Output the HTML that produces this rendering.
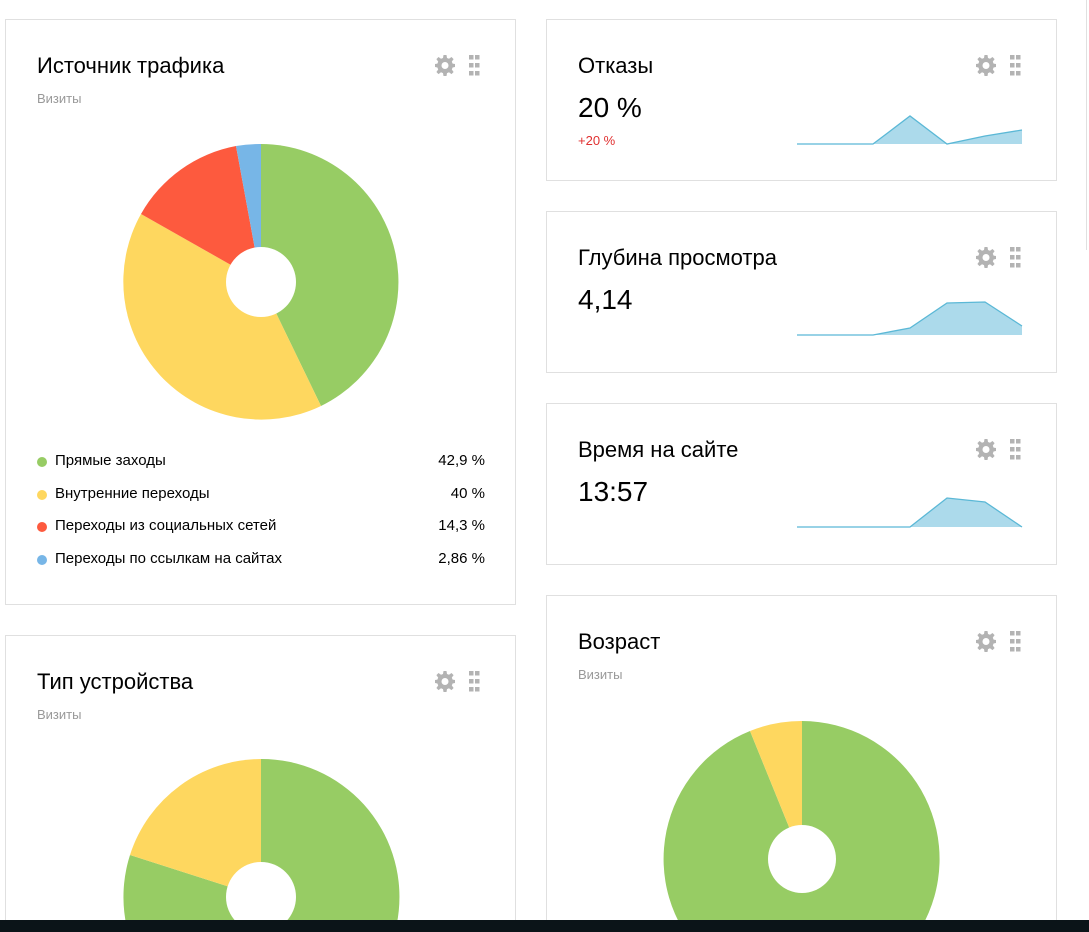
<!DOCTYPE html>
<html><head><meta charset="utf-8"><style>
html,body{margin:0;width:1089px;height:932px;overflow:hidden}
body{background:#fff;position:relative;font-family:"Liberation Sans",sans-serif;color:#000}
.card{position:absolute;border:1px solid #e0e0e0;background:#fff;box-sizing:border-box}
.t{position:absolute;font-size:22px;left:31px}
.s{position:absolute;font-size:13px;color:#999;left:31px}
.ic{position:absolute}
.lg{position:absolute;left:31px;width:448px;font-size:15px}
.lg div{height:32.5px;position:relative;padding-left:18px}
.lg i{position:absolute;left:0;top:5px;width:10px;height:10px;border-radius:50%}
.lg span{position:absolute;right:0;top:0}
.big{position:absolute;left:31px;font-size:28px}
</style></head><body>
<svg width="0" height="0" style="position:absolute"><defs>
<g id="tools"><path fill="#b3b3b3" fill-rule="evenodd" d="M9.5 0h3l.5 3 2 .8 2.5-1.8 2.1 2.1L17.8 6.6l.8 2 2.4.4v3l-2.4.5-.8 2 1.8 2.5-2.1 2.1-2.5-1.8-2 .8-.5 2.9h-3L9 18.1 7 17.3l-2.5 1.8-2.1-2.1L4.2 14.5l-.8-2L1 12V9l2.4-.4.8-2L2.4 4.1 4.5 2 7 3.8 9 3zM11 7a3.5 3.5 0 1 0 0 7a3.5 3.5 0 1 0 0-7z"/>
<g fill="#b3b3b3"><rect x="35" y="0" width="4.5" height="4.5"/><rect x="41" y="0" width="4.5" height="4.5"/><rect x="35" y="8" width="4.5" height="4.5"/><rect x="41" y="8" width="4.5" height="4.5"/><rect x="35" y="16" width="4.5" height="4.5"/><rect x="41" y="16" width="4.5" height="4.5"/></g></g>
</defs></svg>

<div class="card" style="left:5px;top:19px;width:511px;height:586px">
<div class="t" style="top:33px">Источник трафика</div>
<div class="s" style="top:71px">Визиты</div>
<svg class="ic" style="left:428px;top:35px" width="50" height="22"><use href="#tools"/></svg>
<div class="lg" style="top:432px">
<div><i style="background:#97cc64"></i>Прямые заходы<span>42,9 %</span></div>
<div><i style="background:#fed75f"></i>Внутренние переходы<span>40 %</span></div>
<div><i style="background:#fd5a3e"></i>Переходы из социальных сетей<span>14,3 %</span></div>
<div><i style="background:#77b6e7"></i>Переходы по ссылкам на сайтах<span>2,86 %</span></div>
</div>
</div>
<div class="card" style="left:5px;top:635px;width:511px;height:297px;border-bottom:none">
<div class="t" style="top:33px">Тип устройства</div>
<div class="s" style="top:71px">Визиты</div>
<svg class="ic" style="left:428px;top:35px" width="50" height="22"><use href="#tools"/></svg>
</div>

<div class="card" style="left:546px;top:19px;width:511px;height:162px">
<div class="t" style="top:33px">Отказы</div>
<svg class="ic" style="left:428px;top:35px" width="50" height="22"><use href="#tools"/></svg>
<div class="big" style="top:72px">20 %</div>
<div style="position:absolute;left:31px;top:113px;font-size:13px;color:#e03030">+20 %</div>
</div>
<div class="card" style="left:546px;top:211px;width:511px;height:162px">
<div class="t" style="top:33px">Глубина просмотра</div>
<svg class="ic" style="left:428px;top:35px" width="50" height="22"><use href="#tools"/></svg>
<div class="big" style="top:72px">4,14</div>
</div>
<div class="card" style="left:546px;top:403px;width:511px;height:162px">
<div class="t" style="top:33px">Время на сайте</div>
<svg class="ic" style="left:428px;top:35px" width="50" height="22"><use href="#tools"/></svg>
<div class="big" style="top:72px">13:57</div>
</div>
<div class="card" style="left:546px;top:595px;width:511px;height:337px;border-bottom:none">
<div class="t" style="top:33px">Возраст</div>
<div class="s" style="top:71px">Визиты</div>
<svg class="ic" style="left:428px;top:35px" width="50" height="22"><use href="#tools"/></svg>
</div>
<div style="position:absolute;left:1086px;top:0;width:1px;height:250px;background:#e0e0e0"></div>

<svg style="position:absolute;left:0;top:0" width="1089" height="932">
<g stroke="#5bb8d6" stroke-width="1.3" fill="#acdaeb">
<path d="M797 144H873L910 116L947 144L985 136L1022 130V144Z" stroke="none"/>
<path d="M797 144H873L910 116L947 144L985 136L1022 130" fill="none"/>
<path d="M797 335H873L910 328L947 303L985 302L1022 326V335Z" stroke="none"/>
<path d="M797 335H873L910 328L947 303L985 302L1022 326" fill="none"/>
<path d="M797 527H910L947 498L985 502L1022 527Z" stroke="none"/>
<path d="M797 527H910L947 498L985 502L1022 527" fill="none"/>
</g>
<path d="M261 282V144A138 138 0 0 1 321 406Z" fill="#97cc64"/>
<path d="M261 282L321 406A138 138 0 0 1 141 214Z" fill="#fed75f"/>
<path d="M261 282L141 214A138 138 0 0 1 236 146Z" fill="#fd5a3e"/>
<path d="M261 282L236 146A138 138 0 0 1 261 144Z" fill="#77b6e7"/>
<circle cx="261" cy="282" r="35" fill="#fff"/>
<path d="M261 897V759A138 138 0 1 1 130 855Z" fill="#97cc64"/>
<path d="M261 897L130 855A138 138 0 0 1 261 759Z" fill="#fed75f"/>
<circle cx="261" cy="897" r="35" fill="#fff"/>
<path d="M802 859V721A138 138 0 1 1 750 731Z" fill="#97cc64"/>
<path d="M802 859L750 731A138 138 0 0 1 802 721Z" fill="#fed75f"/>
<circle cx="802" cy="859" r="34" fill="#fff"/>
</svg>
<div style="position:absolute;left:0;top:920px;width:1089px;height:12px;background:#0b1418"></div>
</body></html>
